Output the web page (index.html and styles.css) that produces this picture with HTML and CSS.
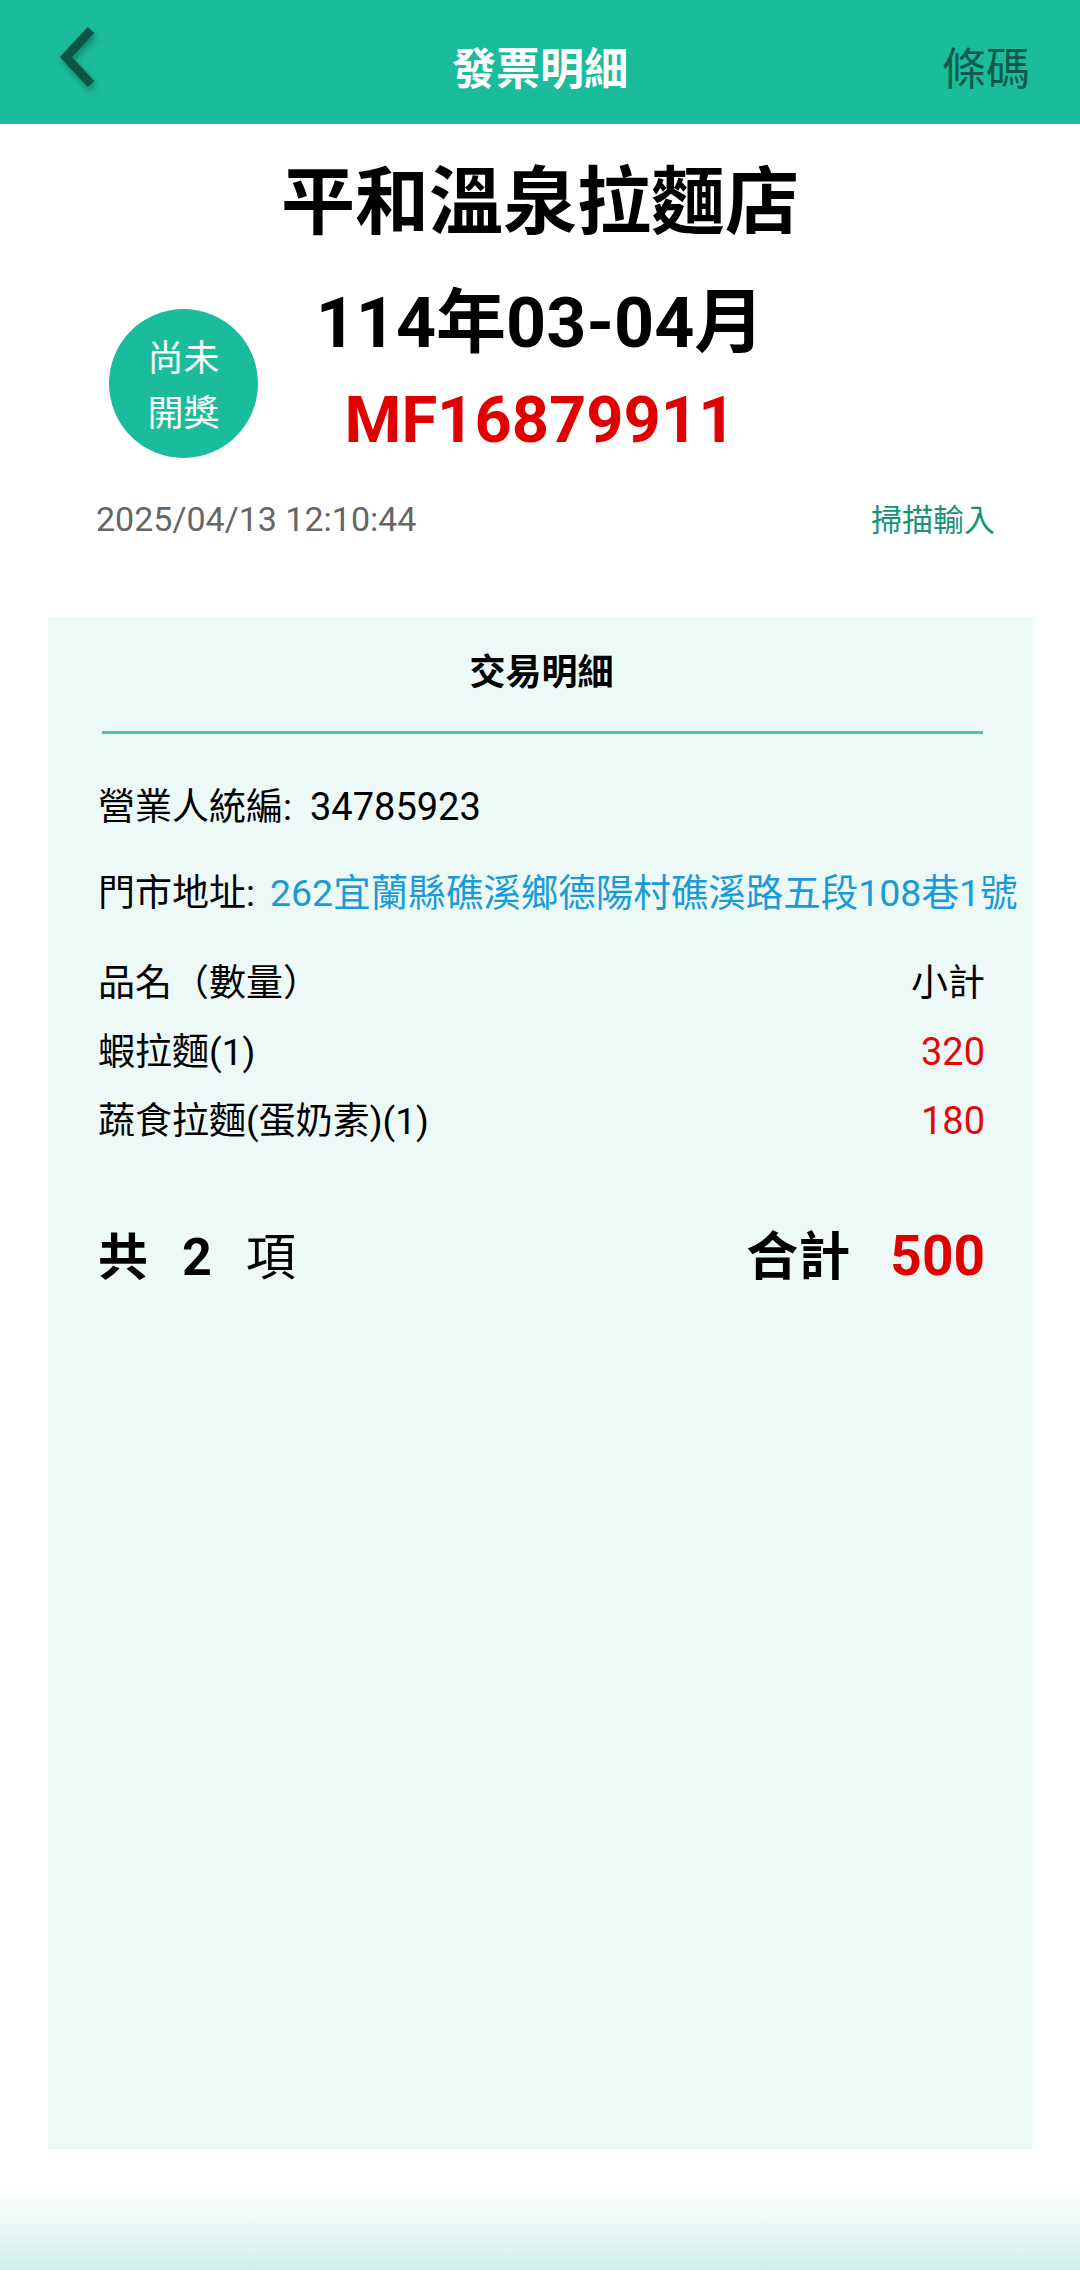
FILE: index.html
```html
<!DOCTYPE html>
<html lang="zh-Hant">
<head>
    <meta charset="UTF-8">
    <meta name="viewport" content="width=device-width, initial-scale=1.0">
    <title>發票明細</title>
    <link rel="stylesheet" href="styles.css">
</head>
<body>
    <div id="page">
        <div id="topbar">
            <a class="back" href="#">
                <svg width="50" height="70" viewBox="0 0 50 70">
                    <polyline points="37,3 12,30 37,57" fill="none" stroke="#0b5446" stroke-width="9" stroke-linejoin="miter"/>
                </svg>
            </a>
            <div class="title">發票明細</div>
            <div class="barcode">條碼</div>
        </div>

        <h1 class="store">平和溫泉拉麵店</h1>

        <div id="invoice-head">
            <div class="badge">
                <span>尚未</span>
                <span>開獎</span>
            </div>
            <div class="invoice-info">
                <div class="period">114年03-04月</div>
                <div class="number">MF16879911</div>
            </div>
        </div>

        <div class="meta">
            <span class="time">2025/04/13 12:10:44</span>
            <span class="scan">掃描輸入</span>
        </div>

        <div id="detail-card">
            <h2>交易明細</h2>
            <div class="divider"></div>

            <div class="field field-seller">
                <span>營業人統編:</span><span class="value">34785923</span>
            </div>
            <div class="field field-address">
                <span>門市地址:</span><span class="value address">262宜蘭縣礁溪鄉德陽村礁溪路五段108巷1號</span>
            </div>

            <div class="item-row item-head">
                <span>品名（數量）</span>
                <span>小計</span>
            </div>
            <div class="item-row">
                <span>蝦拉麵(1)</span>
                <span class="amount">320</span>
            </div>
            <div class="item-row">
                <span>蔬食拉麵(蛋奶素)(1)</span>
                <span class="amount">180</span>
            </div>

            <div class="totals">
                <div class="count">
                    <span class="strong">共</span><span class="count-num">2</span><span class="count-unit">項</span>
                </div>
                <div class="sum">
                    <span class="strong sum-label">合計</span><span class="sum-num">500</span>
                </div>
            </div>
        </div>

        <div class="bottom-fade"></div>
    </div>
</body>
</html>
```

FILE: styles.css
```css
body {
    margin: 0;
    padding: 0;
    font-family: Roboto, "Noto Sans CJK TC", sans-serif;
    background-color: #fff;
    color: #000;
}
#page {
    display: flex;
    flex-direction: column;
    height: 100vh;
}
/* Barra superior */
#topbar {
    height: 124px;
    flex-shrink: 0;
    background-color: #1abc9c;
    display: grid;
    grid-template-columns: 1fr auto 1fr;
    align-items: center;
}
#topbar .back {
    justify-self: start;
    margin-left: 54px;
    display: flex;
}
#topbar .back svg {
    filter: drop-shadow(2px 4px 3px rgba(0, 0, 0, 0.3));
}
#topbar .title {
    font-size: 44px;
    font-weight: bold;
    color: #fff;
    margin-top: 8px;
}
#topbar .barcode {
    justify-self: end;
    margin-right: 50px;
    margin-top: 8px;
    font-size: 44px;
    color: #0e5a4b;
}
.store {
    margin: 35px 0 0;
    font-size: 74px;
    line-height: 88px;
    font-weight: bold;
    text-align: center;
}
/* Cabeçalho da fatura */
#invoice-head {
    margin-top: 36px;
    display: grid;
    grid-template-columns: 1fr auto 1fr;
    align-items: start;
}
.badge {
    justify-self: start;
    margin: 26px 0 0 109px;
    width: 149px;
    height: 149px;
    border-radius: 50%;
    background-color: #1bbc9b;
    color: #fff;
    font-size: 36px;
    line-height: 55px;
    display: flex;
    flex-direction: column;
    justify-content: center;
    align-items: center;
    padding-top: 6px;
    box-sizing: border-box;
}
.invoice-info {
    text-align: center;
    font-weight: bold;
}
.period {
    font-size: 70px;
    line-height: 80px;
}
.number {
    margin-top: 17px;
    font-size: 65px;
    line-height: 80px;
    color: #e00000;
}
.meta {
    margin-top: 39px;
    padding: 0 85px 0 96px;
    display: flex;
    justify-content: space-between;
    align-items: baseline;
    font-size: 34px;
    line-height: 40px;
}
.meta .time {
    color: #666;
}
.meta .scan {
    color: #17937a;
    font-size: 31px;
}
/* Cartão de detalhes */
#detail-card {
    flex: 1;
    margin: 77px 47px 0 48px;
    padding: 30px 48px 0 50px;
    background-color: #edf9f6;
    font-size: 37px;
    line-height: 50px;
}
#detail-card h2 {
    margin: 0;
    font-size: 36px;
    line-height: 50px;
    text-align: center;
}
.divider {
    margin: 33px 2px 0 4px;
    height: 3px;
    background-color: #56c2ac;
}
.field {
    white-space: nowrap;
}
.field-seller {
    margin-top: 48px;
}
.field-address {
    margin-top: 35px;
}
.field .value {
    margin-left: 18px;
}
.field-seller .value {
    font-size: 38px;
}
.field .address {
    margin-left: 15px;
    font-size: 37.5px;
    color: #1a9bd7;
}
.item-row {
    display: flex;
    justify-content: space-between;
    align-items: baseline;
    margin-top: 18px;
}
.item-row.item-head {
    margin-top: 40px;
}
.amount {
    color: #e00a0a;
    font-size: 38px;
}
.totals {
    margin-top: 74px;
    display: flex;
    justify-content: space-between;
    align-items: baseline;
    font-size: 50px;
    line-height: 70px;
}
.strong {
    font-weight: bold;
}
.sum-label {
    font-size: 52px;
}
.count-num {
    margin-left: 34px;
    font-size: 52px;
    font-weight: bold;
}
.count-unit {
    margin-left: 34px;
}
.sum-num {
    margin-left: 40px;
    font-size: 55px;
    font-weight: bold;
    color: #e00000;
}
.bottom-fade {
    flex-shrink: 0;
    margin-top: 41px;
    height: 80px;
    background: linear-gradient(to bottom, #fff, #d0efe9);
}
```
